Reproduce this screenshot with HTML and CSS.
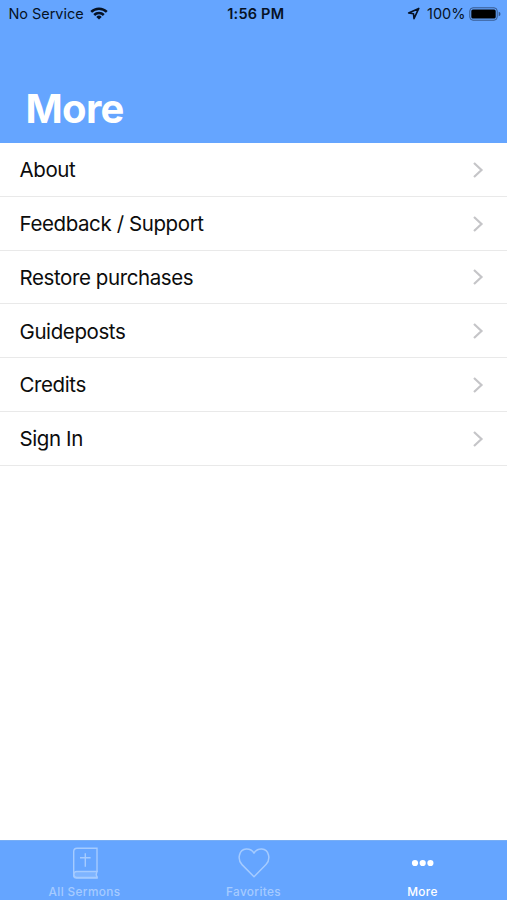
FILE: index.html
```html
<!DOCTYPE html>
<html lang="en">
<head>
<meta charset="utf-8">
<title>More</title>
<link rel="stylesheet" href="styles.css">
</head>
<body>
<div class="app">
  <header class="header">
    <div class="status">
      <div class="status-left">
        <span class="carrier">No Service</span>
        <svg class="wifi" width="18" height="13" viewBox="0 0 18 13"><g fill="none" stroke="#061225" stroke-width="2.5"><path d="M1.2 4.9a11 11 0 0 1 15.6 0"/><path d="M4.2 8a6.8 6.8 0 0 1 9.6 0"/></g><path d="M9 12.6 6.3 9.9a3.8 3.8 0 0 1 5.4 0z" fill="#061225"/></svg>
      </div>
      <span class="time">1:56 PM</span>
      <div class="status-right">
        <svg class="location" width="13" height="13" viewBox="0 0 13 13"><path d="M11.8 1.4 1.6 6l4.9.7.5 4.9z" fill="none" stroke="#061225" stroke-width="1.6" stroke-linejoin="round"/></svg>
        <span class="percent">100%</span>
        <svg class="battery" width="33" height="14" viewBox="0 0 33 14"><rect x=".8" y=".8" width="27.4" height="12.4" rx="3.2" fill="none" stroke="#36588c" stroke-width="1"/><rect x="2.3" y="2.4" width="24.4" height="9.2" rx="1.6" fill="#000"/><path d="M29.7 4.7q1.8.6 1.8 2.3t-1.8 2.3z" fill="#36588c"/></svg>
      </div>
    </div>
    <h1 class="title">More</h1>
  </header>
  <main class="list">
    <a class="row"><span class="label">About</span><svg class="chevron" width="12" height="18" viewBox="0 0 12 18"><path d="m2 2 7.5 7L2 16"/></svg></a>
    <a class="row"><span class="label">Feedback / Support</span><svg class="chevron" width="12" height="18" viewBox="0 0 12 18"><path d="m2 2 7.5 7L2 16"/></svg></a>
    <a class="row"><span class="label">Restore purchases</span><svg class="chevron" width="12" height="18" viewBox="0 0 12 18"><path d="m2 2 7.5 7L2 16"/></svg></a>
    <a class="row"><span class="label">Guideposts</span><svg class="chevron" width="12" height="18" viewBox="0 0 12 18"><path d="m2 2 7.5 7L2 16"/></svg></a>
    <a class="row"><span class="label">Credits</span><svg class="chevron" width="12" height="18" viewBox="0 0 12 18"><path d="m2 2 7.5 7L2 16"/></svg></a>
    <a class="row"><span class="label">Sign In</span><svg class="chevron" width="12" height="18" viewBox="0 0 12 18"><path d="m2 2 7.5 7L2 16"/></svg></a>
  </main>
  <nav class="tabs">
    <a class="tab">
      <svg class="tab-icon" width="34" height="34" viewBox="0 0 34 34" fill="none" stroke="currentColor" stroke-width="1.4"><path d="M29 26V2.2H9Q5.7 2.2 5.7 5.5v23.7q0 2.8 3 2.8H29v-1.8"/><path d="M5.7 28.5q0-3 3-3H29l-.8 3 .8 3H8.7q-3 0-3-3z" fill="currentColor" fill-opacity=".4"/><path d="M17.3 7.2v13.6M12 11.7h10.6"/></svg>
      <span>All Sermons</span>
    </a>
    <a class="tab">
      <svg class="tab-icon" width="34" height="34" viewBox="0 0 34 34" fill="none" stroke="currentColor" stroke-width="1.5" stroke-linejoin="round"><path d="M17 30.8 5 18.6C-.1 13.3 2.1 3.5 9.1 3.1c3.6-.2 6.2 1.3 7.9 4 1.7-2.7 4.3-4.2 7.9-4 7 .4 9.2 10.2 4.1 15.5z"/></svg>
      <span>Favorites</span>
    </a>
    <a class="tab active">
      <svg class="tab-icon" width="34" height="34" viewBox="0 0 34 34" fill="currentColor"><circle cx="9" cy="17" r="3.1"/><circle cx="16.7" cy="17" r="3.1"/><circle cx="24.4" cy="17" r="3.1"/></svg>
      <span>More</span>
    </a>
  </nav>
</div>
</body>
</html>
```
FILE: styles.css
```css
* { box-sizing: border-box; }
body { margin: 0; font-family: Inter, "Liberation Sans", sans-serif; background: #fff; }
svg { display: block; flex: none; }
.app { display: flex; flex-direction: column; width: 507px; height: 900px; overflow: hidden; }
.header { display: flex; flex-direction: column; justify-content: space-between; height: 142.5px; flex: none; background: #65a5ff; }
.status { display: grid; grid-template-columns: 1fr auto 1fr; align-items: center; height: 27px; padding: 0 5px 0 8.5px; color: #061225; font-size: 14.5px; white-space: nowrap; }
.status-left, .status-right { display: flex; align-items: center; }
.status-left { gap: 6px; }
.carrier { letter-spacing: -.05px; }
.status-right { justify-content: flex-end; }
.time { font-weight: 600; letter-spacing: .2px; padding-left: 1px; }
.percent { margin: 0 3.5px 0 7px; }
.title { margin: 0; padding: 0 0 9px 25.5px; font-size: 40px; line-height: 50px; font-weight: 700; letter-spacing: -.7px; color: #fff; }
.list { flex: 1; padding-top: .6px; }
.row { display: flex; align-items: center; justify-content: space-between; height: 53.75px; padding: 1px 23.5px 0 19.5px; border-bottom: 1px solid #e9e9e9; }
.label { font-size: 20.5px; letter-spacing: -.4px; color: #0c0c0c; }
.chevron { fill: none; stroke: #c5c5c8; stroke-width: 2.2; }
.tabs { display: grid; grid-template-columns: repeat(3, 1fr); height: 60px; flex: none; background: #65a5ff; border-top: 1px solid #78aef5; }
.tab { display: flex; flex-direction: column; align-items: center; padding-top: 5px; color: #a5cbff; font-size: 11.8px; font-weight: 500; letter-spacing: .37px; line-height: 16px; gap: 4px; }
.tab.active { color: #fff; }
```
